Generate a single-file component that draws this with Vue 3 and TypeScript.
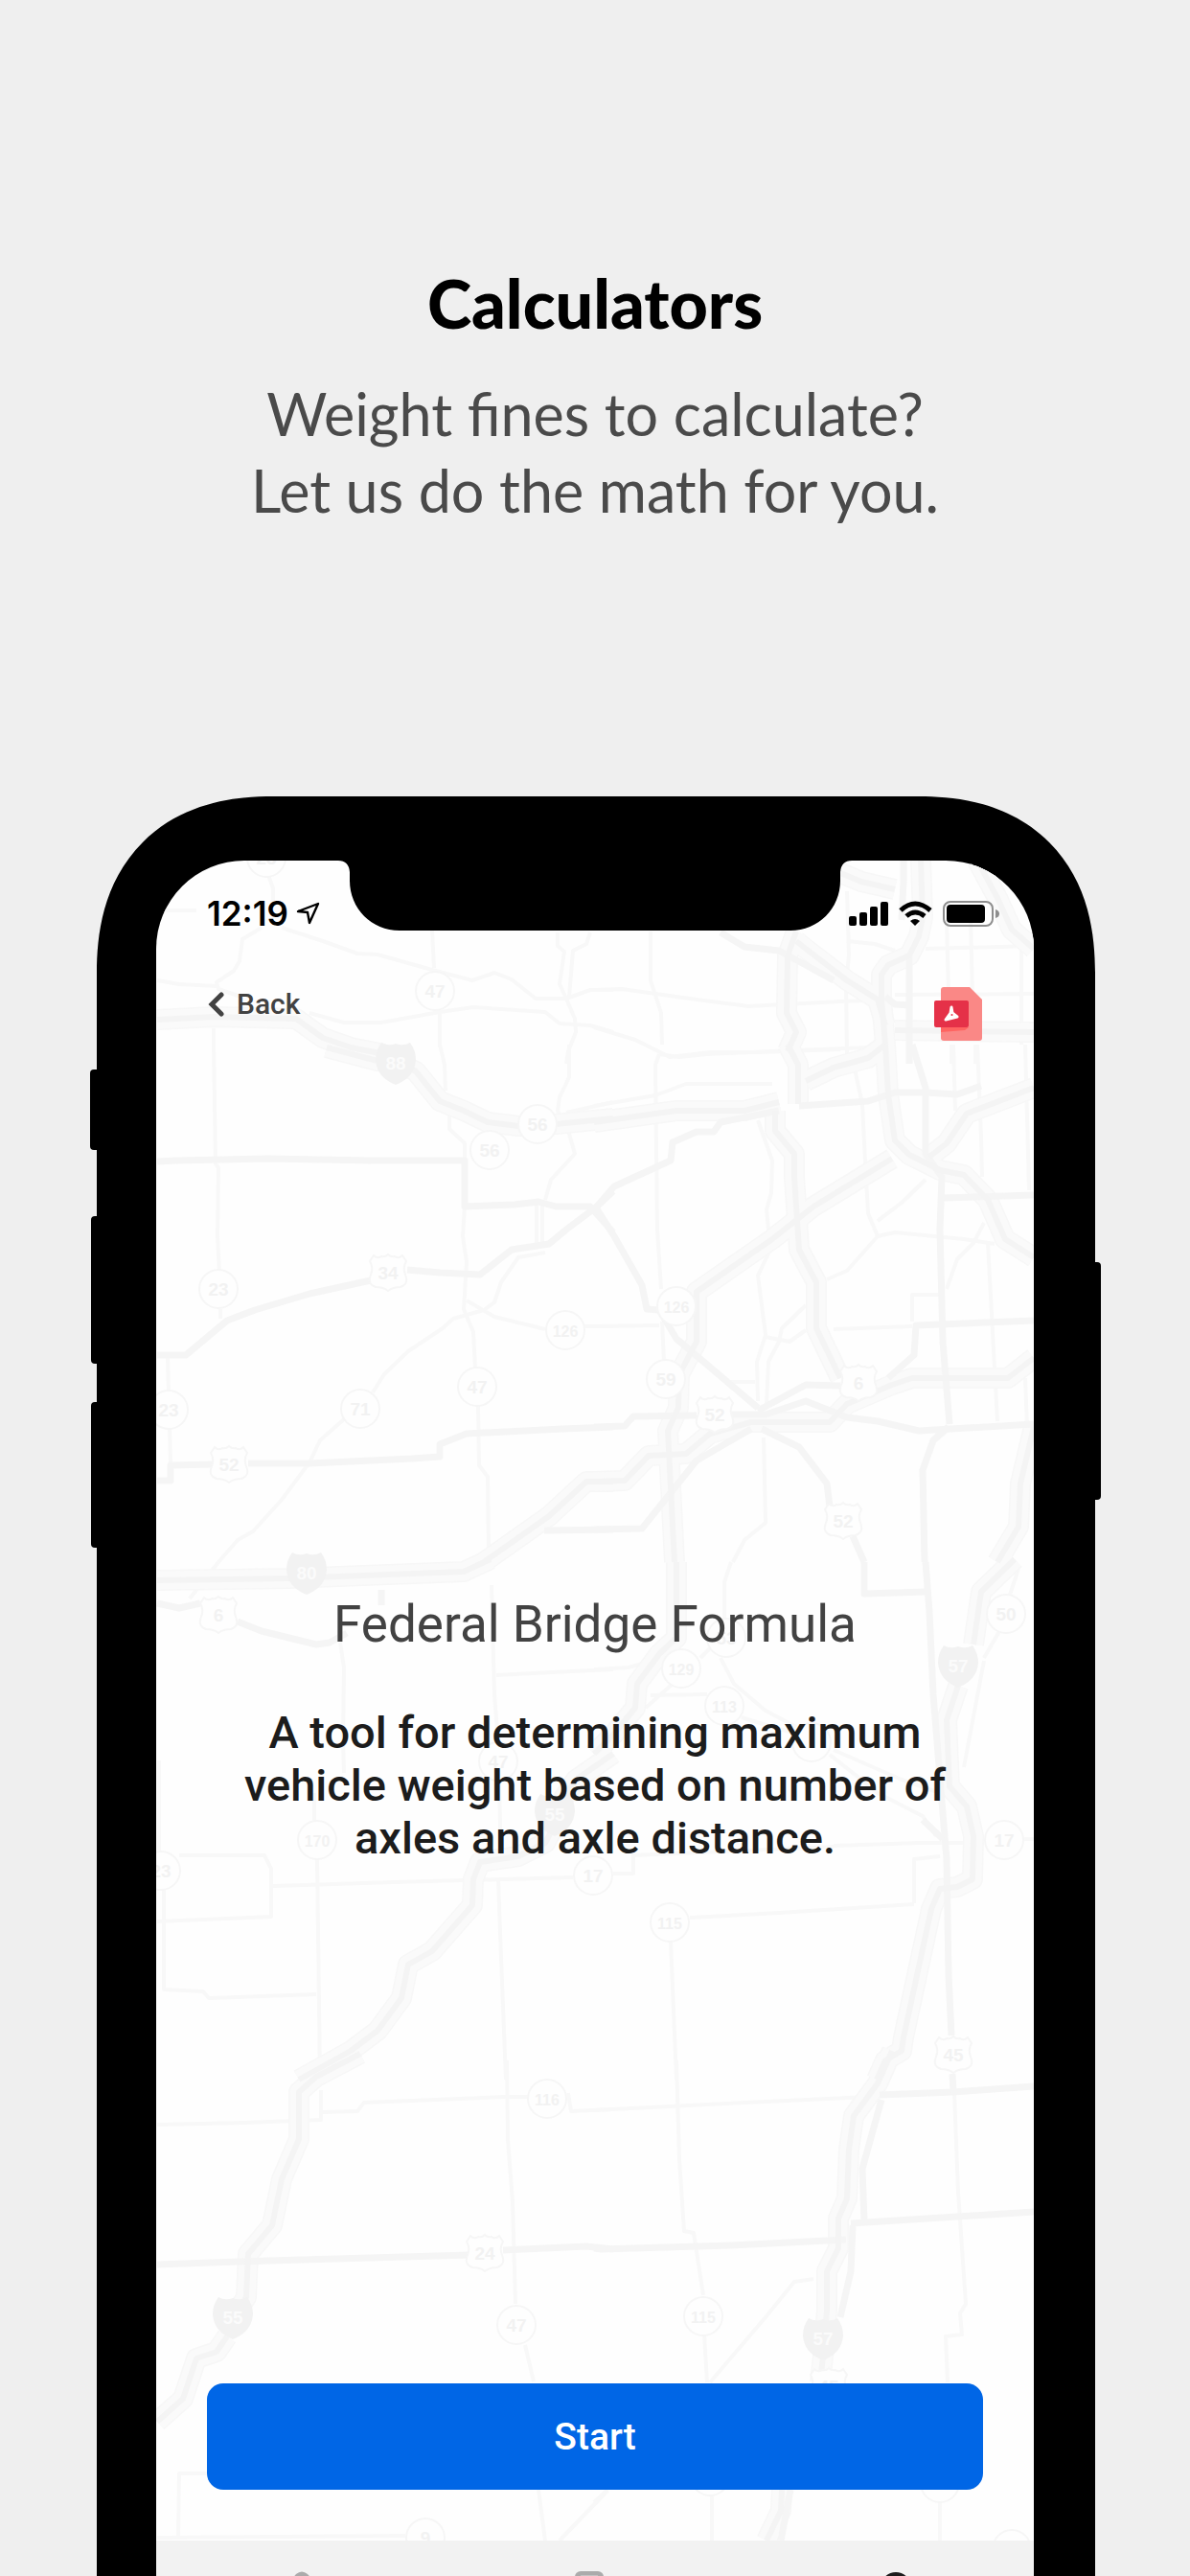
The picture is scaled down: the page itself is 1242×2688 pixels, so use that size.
<script setup lang="ts">
type Kind = 'state' | 'us' | 'interstate'

interface Tile {
  x: number
  y: number
  sx: number
  sy: number
  minor: string[]
  us: string[]
  interstate: string[]
  badges: [Kind, string, number, number][]
}

const SX = 1 / 2.8

const tiles: Tile[] = [
  {
    x: 80, y: 810, sx: SX, sy: 1 / 3,
    minor: [
      '560,310 575,350 575,390', '235,420 350,420',
      '600,475 720,515 820,555 880,558 1040,605 1155,638 1220,615 1270,635 1340,695 1430,695 1500,670 1568,670',
      '540,475 485,510 475,580 460,610 410,645 415,665 480,690', '235,640 300,650 410,658',
      '1040,483 1045,600', '1060,730 1060,850',
      '680,740 780,772 890,770 1060,738 1160,722 1370,738 1410,775 1500,780 1568,800',
      '1405,490 1405,530 1425,550 1410,650 1432,695 1455,760 1460,800 1435,860 1432,900',
      '1500,490 1490,525 1450,545 1440,690', '400,790 400,840',
    ],
    us: [],
    interstate: ['235,762 400,752 640,758 720,820 800,850 900,870'],
    badges: [['state', '23', 555, 255], ['state', '47', 1047, 672]],
  },
  {
    x: 620, y: 810, sx: SX, sy: 1 / 3,
    minor: [
      '165,485 165,640 195,740 200,840', '0,670 80,665 300,700 450,720 720,705 870,700',
      '0,785 120,825 220,880 340,865 480,865 720,855', '740,360 745,560 735,650 740,880',
      '1030,450 1035,680', '1100,450 1105,690', '970,540 1285,530', '880,685 1285,680',
      '1250,500 1250,840', '740,515 820,525 880,545', '1045,840 1045,900', '1115,840 1115,900',
    ],
    us: ['370,490 440,535 540,545 620,590 700,640', '920,560 920,900', '905,265 905,330 900,450', '850,690 880,715 920,718'],
    interstate: [
      '715,300 780,330 880,355', '955,265 960,440 950,500 920,560 860,590 840,620 840,700 850,840',
      '590,485 565,560 562,740 590,800 565,860', '590,515 620,540 740,640 830,700 850,780',
      '1120,265 1180,380 1220,480 1285,540', '880,795 1285,800',
    ],
    badges: [],
  },
  {
    x: 80, y: 1090, sx: SX, sy: 540 / 1568,
    minor: [
      '400,0 405,360 415,375 412,580 418,690', '420,800 420,830', '265,950 270,1060', '272,1160 275,1270',
      '1090,210 1090,255 1135,300 1135,350', '1135,490 1128,580 1140,660 1132,800 1160,870 1165,980',
      '1173,1095 1175,1275 1200,1310 1205,1540', '1568,175 1430,205',
      '1440,0 1440,100 1410,160 1405,200 1440,270 1455,330 1385,410 1370,470', '1345,480 1345,600', '1362,480 1360,600',
      '1370,630 1290,645 1240,720 1220,780 1190,805 1100,830 1070,860 970,930 900,1000 865,1055',
      '780,1135 710,1200 680,1265 600,1380 515,1475 470,1500 415,1568', '1140,775 1220,825 1370,862',
      '1485,855 1568,853', '1060,0 1075,60 1078,140',
    ],
    us: [
      '235,355 290,350 560,345 860,350 1135,350 1135,490 1280,485 1350,475 1400,492 1500,492 1568,570',
      '235,940 320,940 440,835 520,805 680,755 860,715',
      '965,683 1060,690 1180,698 1270,622 1380,605 1430,560 1520,490 1568,445',
      '235,1320 275,1320 275,1275 400,1273',
      '500,1270 680,1268 980,1255 1060,1250 1060,1210 1140,1180 1420,1165 1568,1160', '1365,1472 1568,1470',
    ],
    interstate: [
      '730,10 880,50 930,50 990,80 1060,170 1130,200 1200,235 1290,248 1400,240 1568,225',
      '1190,1568 1380,1430 1490,1325 1568,1325',
    ],
    badges: [
      ['interstate', '88', 932, 55], ['state', '56', 1208, 320], ['state', '56', 1347, 242], ['state', '23', 413, 740],
      ['state', '23', 270, 1107], ['state', '71', 828, 1103], ['state', '47', 1170, 1037], ['state', '126', 1428, 865],
      ['us', '34', 910, 692], ['us', '52', 446, 1273],
    ],
  },
  {
    x: 620, y: 1090, sx: SX, sy: 540 / 1568,
    minor: [
      '190,30 250,38 330,28 520,20 870,5', '190,30 180,60 185,560 195,740', '0,185 180,155 270,120 520,120',
      '480,230 520,350 518,450 505,500 515,620 480,700 500,880 475,960 480,1080',
      '680,710 740,685 830,580 880,568 1080,590 1170,605', '830,580 800,510 790,300 785,180 760,60',
      '830,535 900,480 970,410', '1050,0 1055,200', '1120,0 1130,280 1135,400', '1260,0 1270,440',
      '1030,740 1060,650 1110,600 1140,540', '1150,600 1180,1140', '930,840 930,758 1010,758', '0,853 190,850',
      '700,862 930,853', '620,790 550,860 540,900 510,960 505,1090', '500,885 570,900 620,865', '390,1022 470,1022',
      '200,840 205,960', '495,1190 500,1450 440,1500 405,1568', '1260,1010 1265,1160',
    ],
    us: [
      '600,185 800,172 880,145 970,145 1060,150 1130,125', '930,0 970,130 970,330 1015,400 1010,560 1020,900 1040,1150',
      '1020,465 1285,455',
      '540,200 370,235 350,265 300,265 230,295 225,350 60,430 5,495 60,580 140,730 155,800 190,805 240,890 330,970 480,1100',
      '720,1035 620,1030 480,1110', '460,1165 300,1260 140,1465 0,1468', '0,1160 90,1155 115,1128 300,1125',
      '400,1120 500,1120 620,1080 740,1130 830,1140 950,1170 1285,1150', '1285,835 940,850 935,940 860,1010',
      '1035,1160 990,1200 960,1290 965,1568', '490,1165 600,1220 680,1330 690,1400', '755,1490 790,1568',
    ],
    interstate: [
      '0,235 240,200 440,200 540,175', '530,200 530,260 585,330 585,400 600,620 650,720 650,860 720,1010',
      '565,0 595,60 595,180', '620,110 700,70 800,40 850,0',
      '850,0 860,150 880,290 920,335 1010,380 1080,395 1150,470 1200,590 1285,645',
      '1285,130 1090,210 1030,300 980,340', '870,345 640,490 520,590 300,750 300,900 250,1000 245,1100 215,1170 235,1568',
      '0,1325 90,1320 160,1245 270,1240 340,1180 460,1145 690,1145 740,1090 870,1030 930,1010 1210,1010 1285,950',
      '1285,1160 1245,1330 1240,1460 1180,1568',
    ],
    badges: [
      ['state', '126', 242, 792], ['state', '59', 210, 1014], ['us', '52', 352, 1120], ['us', '6', 772, 1025],
      ['us', '52', 728, 1443],
    ],
  },
  {
    x: 80, y: 1630, sx: SX, sy: 540 / 1568,
    minor: [
      '1212,70 1220,400 1232,550', '770,245 780,320 778,540 780,640', '695,700 695,790', '702,900 710,1568',
      '1225,342 1390,335 1568,325', '240,600 242,880', '300,888 550,888 568,930 568,1075 440,1080 235,1088',
      '255,985 255,1295 370,1300 385,1320 700,1310', '575,980 930,970 1450,955', '1232,960 1240,1200 1255,1568',
      '1235,660 1240,930', '415,0 330,110',
    ],
    us: ['235,125 300,140 360,125', '470,180 540,210 700,250 740,245 790,215', '890,85 890,130'],
    interstate: [
      '235,55 620,50 1130,30 1210,-10', '1568,580 1460,660 1395,760',
      '1395,800 1370,850 1290,890 1180,910 1160,960 1155,1040 1040,1180 970,1220 950,1320 880,1420 800,1480 650,1568',
    ],
    badges: [
      ['interstate', '80', 672, 33], ['us', '6', 413, 160], ['state', '47', 1232, 605], ['interstate', '55', 1397, 763],
      ['state', '170', 703, 842], ['state', '23', 245, 935], ['state', '17', 1508, 950],
    ],
  },
  {
    x: 620, y: 1630, sx: SX, sy: 540 / 1568,
    minor: [
      '0,325 100,320 150,305', '400,0 380,60 380,180', '370,290 410,370 500,450 590,500', '165,405 330,400',
      '150,440 230,370', '690,585 780,660 830,700 960,770 1000,830', '700,570 900,660 1010,700', '430,470 520,500 590,520',
      '310,290 340,260', '700,860 950,850 1140,850', '55,945 115,945 115,888 700,862', '935,1035 935,900 1010,890',
      '280,1078 540,1062 935,1037', '225,1150 240,1568', '1255,838 1285,838', '1215,100 1240,20',
      '1140,290 1200,180', '1080,620 1140,300',
    ],
    us: ['790,0 790,95 970,90', '970,0 980,150 990,400 1020,760 1030,900 1035,1250 1045,1435', '1020,840 960,780'],
    interstate: [
      '242,0 242,230 190,280 125,370 120,440 60,520 0,580', '1230,-10 1130,90 1110,250',
      '1065,375 1030,480 1040,680 1090,740 1110,830 1105,960 1060,985 1010,990 985,1050 905,1440 900,1480 850,1510 825,1568',
    ],
    badges: [
      ['state', '50', 1205, 158], ['interstate', '57', 1065, 313], ['state', '53', 385, 230], ['state', '129', 256, 322],
      ['state', '113', 380, 435], ['state', '', 635, 545], ['state', '17', 1198, 842],
      ['state', '115', 222, 1092], ['us', '45', 1050, 1493],
    ],
  },
  {
    x: 80, y: 2150, sx: SX, sy: 538 / 1568,
    minor: [
      '235,195 490,188 715,180 715,90', '720,157 820,155 840,128 1250,110 1320,110', '1435,100 1445,155 1568,150',
      '1258,0 1260,240 1275,430 1283,740', '1310,865 1335,975', '380,1255 300,1255 298,1445', '235,1450 960,1445',
      '1350,1305 1368,1460', '1550,1310 1410,1460',
    ],
    us: ['235,620 560,610 1150,592', '1245,577 1490,565 1568,575'],
    interstate: [
      '830,-20 700,50 650,95 650,240 600,360 570,500 500,590 495,720 460,780',
      '440,840 410,885 350,905 310,1030 235,1100',
    ],
    badges: [
      ['state', '116', 1375, 118], ['us', '24', 1193, 585], ['state', '47', 1286, 805], ['interstate', '55', 457, 780],
      ['state', '9', 1020, 1450],
    ],
  },
  {
    x: 620, y: 2150, sx: SX, sy: 538 / 1568,
    minor: [
      '240,0 250,300 262,520 290,525 318,715', '322,835 330,980', '0,152 330,135 800,112',
      '1052,100 1065,400 1085,740 1070,770 1075,835 1028,840 1032,980', '640,665 585,672 500,780 340,980',
      '345,1320 345,1460', '1010,1340 1012,1460', '40,1305 0,1345',
    ],
    us: [
      '0,570 20,575 400,562 735,545', '835,105 1050,95 1285,80', '840,120 785,330 790,490', '750,495 1060,475 1285,460',
      '755,500 750,640 720,780', '1048,40 1050,95', '575,1305 545,1460',
    ],
    interstate: [
      '870,-30 830,70 760,170 745,270 740,420 715,480 715,570 680,640 680,760 668,900', '670,900 660,980',
      '550,1305 545,1370 505,1460',
    ],
    badges: [
      ['state', '115', 320, 777], ['interstate', '57', 668, 845], ['us', '45', 685, 990], ['state', '', 340, 1265],
      ['state', '', 1010, 1285], ['state', '', 1220, 1485],
    ],
  },
]

// Converts a tile's local point list to screen coordinates.
const place = (t: Tile, pts: string): string =>
  pts
    .split(' ')
    .map((p) => {
      const [x, y] = p.split(',').map(Number)
      return `${Math.round(t.x + x * t.sx)},${Math.round(t.y + y * t.sy)}`
    })
    .join(' ')

const collect = (key: 'minor' | 'us' | 'interstate'): string[] => tiles.flatMap((t) => t[key].map((p) => place(t, p)))

const minorRoads = collect('minor')
const usRoads = collect('us')
const interstates = collect('interstate')
const badges = tiles.flatMap((t) =>
  t.badges.map(([kind, label, x, y]) => ({
    kind,
    label,
    x: Math.round(t.x + x * t.sx),
    y: Math.round(t.y + y * t.sy),
  })),
)
</script>

<template>
  <div class="page">
    <header class="intro">
      <h1>Calculators</h1>
      <p>Weight fines to calculate?<br />Let us do the math for you.</p>
    </header>

    <div class="phone">
      <span class="key silent"></span>
      <span class="key vol-up"></span>
      <span class="key vol-down"></span>
      <span class="key power"></span>

      <div class="screen">
        <svg class="map" viewBox="163 898 916 1790" aria-hidden="true">
          <polyline v-for="(p, i) in minorRoads" :key="'m' + i" class="minor" :points="p" />
          <polyline v-for="(p, i) in interstates" :key="'c' + i" class="casing" :points="p" />
          <polyline v-for="(p, i) in interstates" :key="'b' + i" class="bed" :points="p" />
          <polyline v-for="(p, i) in usRoads" :key="'u' + i" class="highway" :points="p" />
          <polyline v-for="(p, i) in interstates" :key="'l' + i" class="line" :points="p" />
          <g v-for="(b, i) in badges" :key="'s' + i" :transform="`translate(${b.x} ${b.y})`" :class="['badge', b.kind]">
            <circle v-if="b.kind === 'state'" r="20" />
            <path
              v-else-if="b.kind === 'us'"
              d="M-15-18Q-11-14-7-17Q-3-16 0-19Q3-16 7-17Q11-14 15-18L19-12Q15-5 18 2Q22 12 13 15Q5 15 0 19Q-5 15-13 15Q-22 12-18 2Q-15-5-19-12Z"
            />
            <path v-else d="M-15-21Q-8-17 0-20Q8-17 15-21Q21-13 21-3Q20 15 0 23Q-20 15-21-3Q-21-13-15-21Z" />
            <text y="7" :class="{ long: b.label.length > 2 }">{{ b.label }}</text>
          </g>
        </svg>

        <div class="notch">
          <svg viewBox="0 0 536 73" aria-hidden="true">
            <path d="M0 0Q11 0 12 12V21C12 50 35 73 64 73H472C501 73 524 50 524 21V12Q525 0 536 0Z" />
          </svg>
        </div>

        <div class="status">
          <div class="clock">
            <span>12:19</span>
            <svg width="26" height="26" viewBox="0 0 26 26" aria-hidden="true">
              <path d="M2 11L23 3L14 23L12 12Z" fill="none" stroke="#000" stroke-width="2.4" stroke-linejoin="round" />
            </svg>
          </div>
          <svg width="158" height="28" viewBox="0 0 158 28" aria-hidden="true">
            <rect x="0" y="17" width="8" height="10" rx="2" />
            <rect x="11" y="13" width="8" height="14" rx="2" />
            <rect x="22" y="7" width="8" height="20" rx="2" />
            <rect x="33" y="2" width="8" height="25" rx="2" />
            <g fill="none" stroke="#000" stroke-width="5">
              <path d="M54 11Q69-3 85 11" />
              <path d="M60 17Q69 9 79 17" />
            </g>
            <path d="M64 22Q69 18 74 22L69 27Z" />
            <rect x="99" y="2" width="51" height="25" rx="7" fill="none" stroke="#8e8e8e" stroke-width="2" />
            <rect x="102" y="5" width="40" height="19" rx="4" />
            <path d="M153 10Q157 11 157 14.500T153 19Z" fill="#8e8e8e" />
          </svg>
        </div>

        <nav class="toolbar">
          <a class="back" href="#back">
            <svg width="18" height="28" viewBox="0 0 18 28" aria-hidden="true">
              <path d="M15 4L5 14L15 24" fill="none" stroke="#424242" stroke-width="5" stroke-linecap="round" />
            </svg>
            Back
          </a>
          <button class="pdf" type="button" aria-label="Open PDF">
            <svg width="50" height="56" viewBox="0 0 50 56" aria-hidden="true">
              <path d="M10 0H37L50 13V53Q50 56 47 56H10Q7 56 7 53V3Q7 0 10 0Z" fill="#fa8886" />
              <path d="M7 42H36L32 45L7 47Z" fill="#ff6461" />
              <rect y="14" width="36" height="28" rx="2" fill="#e53148" />
              <path
                d="M18 21L17 27L12 34L24 31L19 27Z"
                fill="#fff"
                stroke="#fff"
                stroke-width="3"
                stroke-linejoin="round"
              />
              <circle cx="18.500" cy="29" r="1" fill="#e53148" />
            </svg>
          </button>
        </nav>

        <main class="content">
          <h2>Federal Bridge Formula</h2>
          <p>A tool for determining maximum vehicle weight based on number of axles and axle distance.</p>
        </main>

        <button class="start" type="button">Start</button>

        <nav class="tabs">
          <button type="button" aria-label="Home">
            <svg width="60" height="60" viewBox="0 0 60 60" aria-hidden="true">
              <path d="M6 24L23 3Q29-2 35 3L54 24V60H6Z" fill="#ababab" />
            </svg>
          </button>
          <button type="button" aria-label="Documents">
            <svg width="60" height="60" viewBox="0 0 60 60" aria-hidden="true">
              <rect x="9" y="0" width="30" height="60" rx="6" fill="#ababab" />
              <rect x="15" y="4" width="18" height="52" fill="#c4c4c4" />
            </svg>
          </button>
          <button type="button" aria-label="Calculators">
            <svg width="60" height="60" viewBox="0 0 60 60" aria-hidden="true">
              <circle cx="39" cy="17" r="13" fill="none" stroke="#1c1c1c" stroke-width="6" />
            </svg>
          </button>
        </nav>
      </div>
    </div>
  </div>
</template>

<style>
body {
  margin: 0;
}
</style>

<style scoped>
* {
  box-sizing: border-box;
}
button {
  border: 0;
  padding: 0;
  background: none;
  font-family: inherit;
}
svg {
  display: block;
}
.page {
  height: 100vh;
  overflow: hidden;
  background: #efefef;
  font-family: Roboto, sans-serif;
}
.intro {
  padding: 276px 40px 279px;
  text-align: center;
  font-family: Lato, sans-serif;
}
.intro h1 {
  margin: 0;
  font-size: 70px;
  line-height: 80px;
  font-weight: 900;
  color: #000;
}
.intro p {
  margin: 36px 0 0;
  font-size: 61px;
  line-height: 80px;
  color: #4a4a4a;
}
.phone {
  position: relative;
  margin: 0 99px 0 101px;
  padding: 67px 64px 0 62px;
  background: #000;
  border-radius: 166px 166px 0 0;
}
@supports (corner-shape: superellipse(1.2)) {
  .phone {
    border-radius: 184px 184px 0 0;
    corner-shape: superellipse(1.2);
  }
}
.key {
  position: absolute;
  width: 12px;
  background: #000;
  border-radius: 4px;
}
.silent {
  left: -7px;
  top: 285px;
  height: 84px;
}
.vol-up {
  left: -6px;
  top: 438px;
  height: 154px;
}
.vol-down {
  left: -6px;
  top: 632px;
  height: 152px;
}
.power {
  right: -6px;
  top: 486px;
  height: 248px;
}
.screen {
  position: relative;
  display: flex;
  flex-direction: column;
  overflow: hidden;
  background: #fefefe;
  border-radius: 92px 92px 0 0;
}
.screen > * {
  position: relative;
}
.screen > .map {
  position: absolute;
  top: 0;
  left: 0;
  width: 100%;
}
.screen > .notch {
  position: absolute;
  top: 0;
  left: 0;
  right: 0;
  display: flex;
  justify-content: center;
}
.notch svg {
  width: 536px;
  height: 73px;
}
.map polyline {
  fill: none;
  stroke-linejoin: round;
}
.minor {
  stroke: #f8f8f8;
  stroke-width: 4px;
}
.highway {
  stroke: #f5f5f5;
  stroke-width: 7px;
}
.casing {
  stroke: #f7f7f7;
  stroke-width: 22px;
}
.bed {
  stroke: #fafafa;
  stroke-width: 19px;
}
.line {
  stroke: #f4f4f4;
  stroke-width: 6px;
}
.badge circle,
.badge.us path {
  fill: #fefefe;
  stroke: #f6f6f6;
  stroke-width: 2px;
}
.badge.interstate path {
  fill: #f2f2f2;
}
.badge text {
  font: bold 19px "Liberation Sans", sans-serif;
  text-anchor: middle;
  fill: #f2f2f2;
}
.badge text.long {
  font-size: 16px;
}
.badge.interstate text {
  fill: #fbfbfb;
}
.status {
  display: flex;
  justify-content: space-between;
  align-items: center;
  height: 108px;
  padding: 2px 35px 0 53px;
}
.clock {
  display: flex;
  align-items: center;
  gap: 8px;
  font-family: Inter, sans-serif;
  font-size: 35px;
  line-height: 40px;
  font-weight: 600;
}
.toolbar {
  display: flex;
  justify-content: space-between;
  align-items: flex-start;
  padding: 24px 54px 0 53px;
}
.back {
  display: flex;
  align-items: center;
  gap: 13px;
  font-size: 30px;
  line-height: 36px;
  font-weight: 500;
  color: #424242;
  text-decoration: none;
}
.content {
  padding: 577px 80px 0;
  text-align: center;
}
.content h2 {
  margin: 0;
  font-size: 53px;
  line-height: 64px;
  font-weight: 400;
  color: #424242;
}
.content p {
  margin: 53px 0 0;
  font-size: 47px;
  line-height: 55px;
  font-weight: 500;
  color: #1c1c1c;
}
.start {
  height: 111px;
  margin: 542px 53px 53px;
  border-radius: 17px;
  background: #0066e6;
  color: #fff;
  font-size: 39px;
  line-height: 48px;
  font-weight: 500;
}
.tabs {
  display: flex;
  height: 140px;
  padding-top: 32px;
  background: #f2f2f2;
}
.tabs button {
  flex: 1;
  display: flex;
  justify-content: center;
}
</style>
